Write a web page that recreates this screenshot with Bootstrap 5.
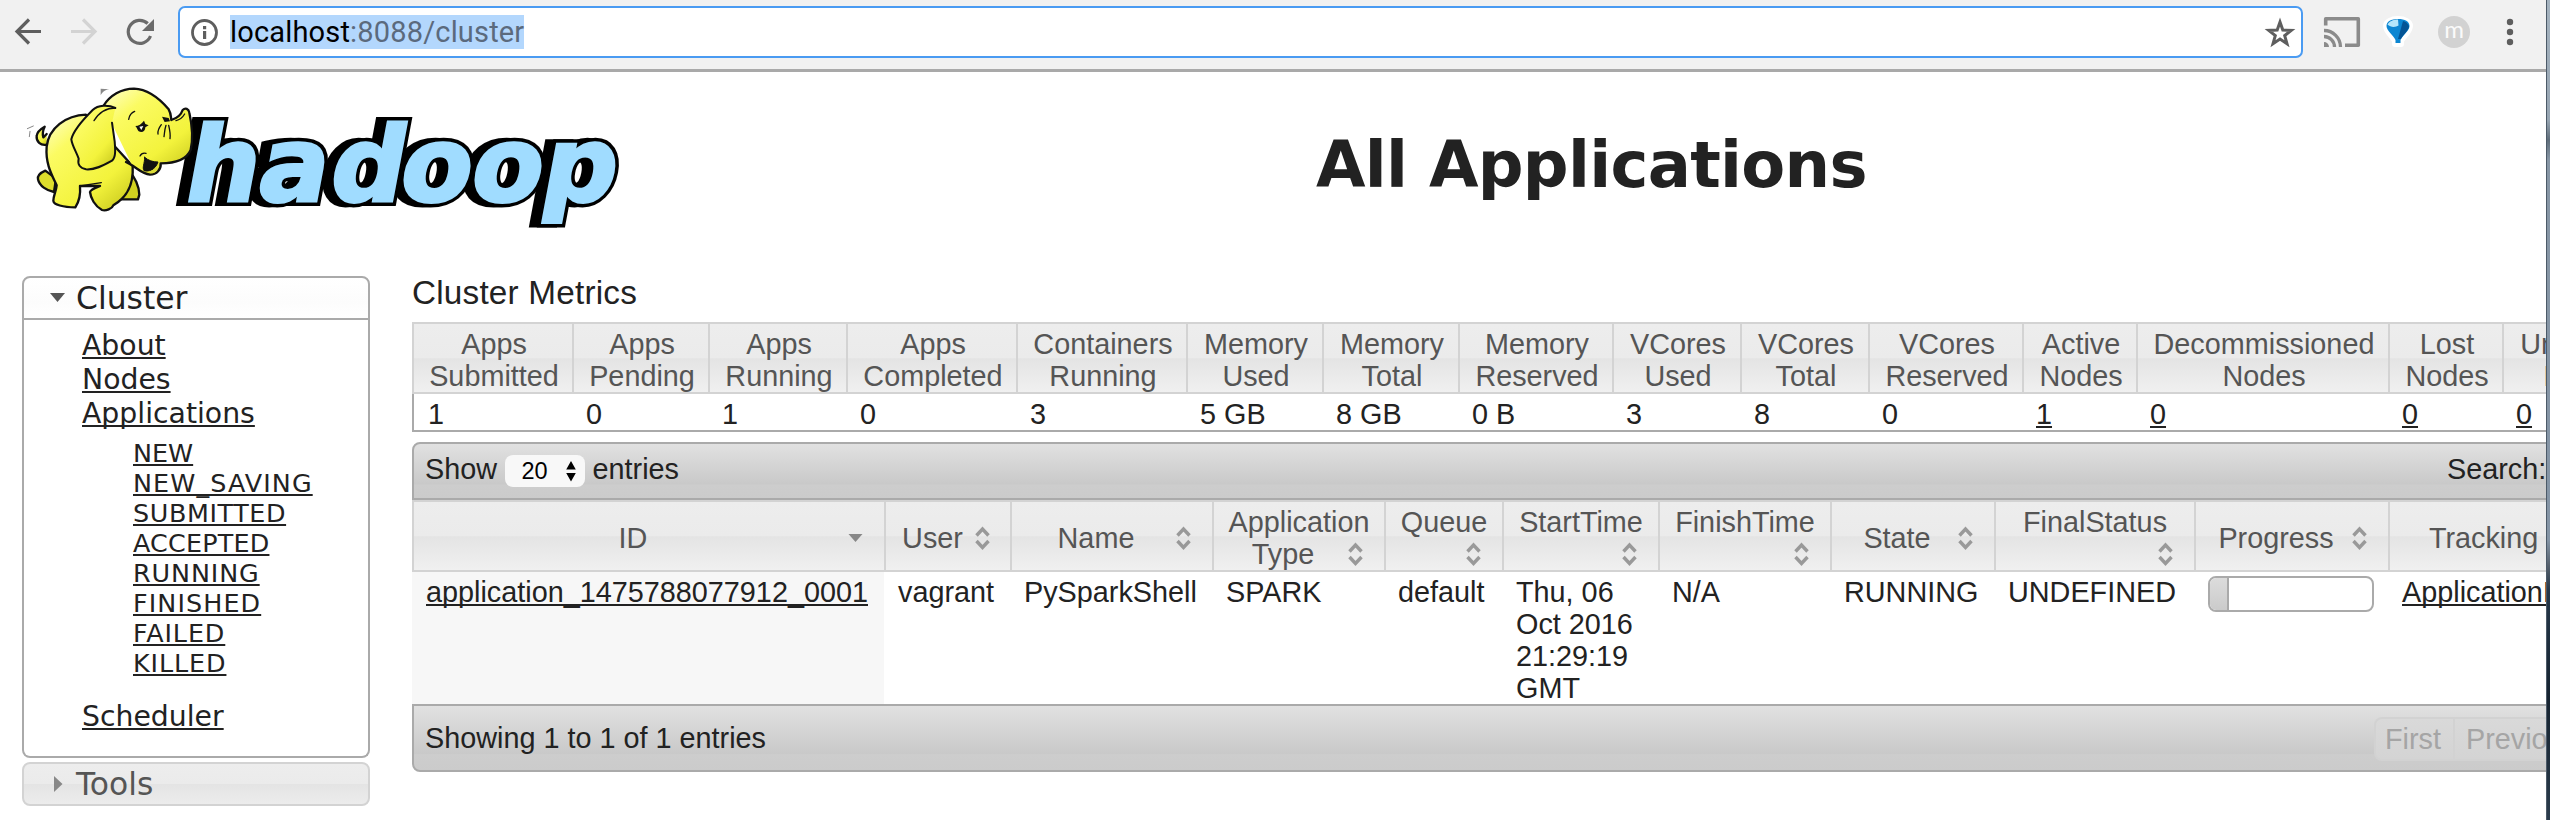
<!DOCTYPE html>
<html lang="en">
<head>
<meta charset="utf-8">
<title>All Applications</title>
<link rel="stylesheet" href="https://cdn.jsdelivr.net/npm/bootstrap@5.3.0/dist/css/bootstrap.min.css">
<script src="https://cdn.jsdelivr.net/npm/bootstrap@5.3.0/dist/js/bootstrap.bundle.min.js"></script>
<style>
  body { margin:0; width:2550px; height:820px; overflow:hidden; background:#fff; color:#222;
         font-family:"Liberation Sans",Arial,sans-serif; font-size:28.8px; line-height:32px; }
  a, a:hover { color:#222; text-decoration:underline; text-decoration-thickness:2px; text-underline-offset:2px; text-decoration-skip-ink:none; }
  .browser { width:2546px; height:820px; overflow:hidden; }
  .desk { width:4px; height:820px; border-left:1px solid #4c5a68;
          background:linear-gradient(#a5b3bf 0,#97a5b2 120px,#5f6d7a 140px,#8796a5 160px,#8494a5 540px,#55606c 566px,#26384a 590px,#162330 700px,#2b3c4c 820px); }
  .toolbar { height:72px; background:#f1f1f1; border-bottom:3px solid #a9a9a9; padding-top:6px; }
  .toolbar svg { flex:none; display:block; }
  .omnibox { margin-left:21px; width:2125px; height:52px; border:2px solid #4a9bf2; border-radius:7px; background:#fff; padding:0 5px 0 9px; }
  .url { margin-left:10px; height:34px; line-height:35px; width:294px; background:#b3d7fd; color:#5b6a7d; font-family:Roboto,sans-serif; font-size:29px; letter-spacing:.17px; white-space:nowrap; }
  .url b { font-weight:400; color:#000; }
  .masthead { height:204px; }
  .masthead svg { flex:none; display:block; }
  .page-title { margin:0 0 0 676px; padding-top:55px; font:bold 64px/76px "DejaVu Sans",Verdana,sans-serif; letter-spacing:-.7px; white-space:nowrap; }
  .side { margin-left:22px; width:348px; font-family:"DejaVu Sans",Verdana,sans-serif; }
  .side-head { height:44px; border:2px solid #aaa; border-radius:8px 8px 0 0; font-size:31.4px; line-height:40px; background:linear-gradient(#fff,#fcfcfc 60%,#fff); padding-left:26px; }
  .side-body { height:438px; border:2px solid #aaa; border-top:0; border-radius:0 0 8px 8px; padding:9px 0 0 58px; font-size:28.3px; line-height:34px; }
  .side-body .states { padding:7px 0 22px 51px; font-size:25.4px; line-height:30px; }
  .sp-2 { letter-spacing:.2px; } .sp-6 { letter-spacing:.6px; } .sp-9 { letter-spacing:.9px; } .sp-11 { letter-spacing:1.1px; }
  .side-tools { margin-top:4px; height:44px; border:2px solid #d3d3d3; border-radius:8px; color:#555; background:linear-gradient(#ededed 0,#ebebeb 50%,#e4e4e4 51%,#ececec 100%); }
  .content-pane { margin-left:42px; width:2134px; overflow:hidden; }
  .wide { width:2252px; }
  .metrics-title { font-size:33.3px; line-height:38px; margin:-2px 0 10px; letter-spacing:.2px; white-space:nowrap; }
  .grid-table { width:2252px; table-layout:fixed; border-collapse:separate; border-spacing:0; }
  .grid-table th { font-weight:400; color:#555; text-align:center; vertical-align:middle; height:72px; padding:4px 0 0 2px;
      border-top:2px solid #d3d3d3; border-bottom:2px solid #d3d3d3; border-left:2px solid #d3d3d3;
      background:linear-gradient(#ededed 0,#ebebeb 50%,#e4e4e4 51%,#f0f0f0 100%); }
  .metrics td { height:38px; padding:4px 0 0 14px; line-height:32px; border-bottom:2px solid #aaa; vertical-align:top; white-space:nowrap; }
  .metrics td:first-child { border-left:2px solid #aaa; }
  .bar-top, .bar-bottom { border:2px solid #aaa; background:linear-gradient(#e1e1e1 0,#c9c9c9 74%,#cdcdcd 76%,#cbcbcb 100%); padding-left:11px; white-space:nowrap; }
  .bar-top { margin-top:10px; height:58px; border-radius:8px 0 0 0; }
  .bar-bottom { height:68px; border-radius:0 0 0 8px; }
  .picker { margin:0 8px 0 7.5px; width:80px; height:32px; border-radius:8px; background:#f8f8f8; color:#000; font-size:23.5px; padding:0 9px 0 17px; }
  .find { width:215px; }
  .apps th { height:72px; padding:4px 12px 0 12px; }
  .apps th:last-child { padding-right:30px; }
  .apps th .hd { display:flow-root; }
  .apps th.snug .hd { margin-right:-1px; }
  .sorter { float:right; width:32px; height:32px; display:block; }
  .apps td { height:132px; padding:4px 8px 0 14px; vertical-align:top; white-space:nowrap; }
  .apps td:first-child { background:#f7f7f7; }
  .meter { width:166px; height:36px; border:2px solid #aaa; border-radius:8px; overflow:hidden; background:#fff; }
  .meter div { height:32px; background:linear-gradient(#dcdcdc,#cbcbcb); border-right:2px solid #aaa; }
  .pager { width:288px; margin-top:1px; }
  .pager span { height:44px; line-height:40px; border:2px solid #d2d2d2; border-right-width:0; background:linear-gradient(#d9d9d9,#d4d4d4); color:#a5a5a5; padding:0 11px; }
  .pager span:first-child { border-radius:8px 0 0 8px; width:79px; padding-left:9px; }
</style>
</head>
<body class="d-flex">
<svg width="0" height="0" class="position-absolute">
  <symbol id="sort" viewBox="0 0 32 32"><path d="M9.500 13.500l6-6.500 6 6.500M9.500 19l6 6.500 6-6.500" fill="none" stroke="#999" stroke-width="3.400"/></symbol>
</svg>
<div class="browser flex-shrink-0">
  <div class="toolbar d-flex">
    <svg width="157" height="52" viewBox="0 6 157 52" fill="none" stroke-width="3.200">
      <path d="M41 31.500H17M29 19.500 17 31.500l12 12" stroke="#5e5e5e"/>
      <path d="M71 31.500h24M83 19.500l12 12-12 12" stroke="#d3d3d3"/>
      <path d="M150.500 36a11.500 11.500 0 1 1-2.800-12.500" stroke="#6a6a6a"/>
      <path d="M154 19v12h-12z" fill="#6a6a6a"/>
    </svg>
    <div class="omnibox d-flex align-items-center">
      <svg width="31" height="30" viewBox="0 0 31 30"><circle cx="15.500" cy="15.500" r="12" fill="none" stroke="#5e5e5e" stroke-width="2.800"/><path d="M14 9h3.200v3.200H14zM14 14h3.200v8H14z" fill="#5e5e5e"/></svg>
      <div class="url"><b>localhost</b>:8088/cluster</div>
      <svg class="ms-auto" width="32" height="32" viewBox="0 0 32 32"><path d="m16 6 2.800 8 8.500.4-6.600 5.200 2.300 8.200-7-4.700-7 4.700 2.300-8.200-6.600-5.200 8.500-.4z" fill="none" stroke="#5e5e5e" stroke-width="3"/></svg>
    </div>
    <svg width="243" height="52" viewBox="2303 6 243 52">
      <path d="M2325.700 25.500v-6.700h32.600v26.400H2345" fill="none" stroke="#8b8b8b" stroke-width="3.600" stroke-linejoin="round"/>
      <path d="M2324 30.500a16.500 16.500 0 0 1 16.500 16.500M2324 36.500a10.500 10.500 0 0 1 10.500 10.500" fill="none" stroke="#8b8b8b" stroke-width="3.300"/>
      <path d="M2324 42a5 5 0 0 1 5 5h-5z" fill="#8b8b8b"/>
      <path d="M2398 19c7 0 12 3 12 7 0 6-7 10-9 15v3h-6v-3c-2-5-9-9-9-15 0-4 5-7 12-7z" fill="#fff" stroke="#fff" stroke-width="6" stroke-linejoin="round"/>
      <path d="M2398 19c7 0 11.500 2.500 11.500 7 0 5-7 9-9 14v3h-5v-3c-2-5-9-9-9-14 0-4.500 4.500-7 11.500-7z" fill="#0c86d2"/>
      <path d="M2398 19.500c-5 0-9 2-10.500 5 3 3 8 3 11 1z" fill="#b5e6fb"/><path d="M2403 21c4 1 6 4 6 6-1 4-6 8-8 12h-3z" fill="#045495"/>
      <circle cx="2454" cy="32" r="16" fill="#d2d2d2"/>
      <text x="2454" y="38" text-anchor="middle" font-family="Lato,sans-serif" font-size="24" fill="#fafafa">m</text>
      <g fill="#5e5e5e"><circle cx="2510" cy="22" r="3.200"/><circle cx="2510" cy="32" r="3.200"/><circle cx="2510" cy="42" r="3.200"/></g>
    </svg>
  </div>

  <header class="masthead d-flex">
    <svg width="640" height="170" viewBox="0 72 640 170">
      <defs><linearGradient id="hide" x1="0" y1="0" x2=".8" y2="1"><stop offset="0" stop-color="#ffffd0"/><stop offset=".3" stop-color="#fbfb62"/><stop offset=".75" stop-color="#f3f33c"/><stop offset="1" stop-color="#cfcf22"/></linearGradient></defs>
      <g transform="translate(0 201) skewX(-10.600)" font-family="DejaVu Sans,sans-serif" font-weight="bold" font-size="104" stroke-linejoin="miter">
        <text x="173 246 318 388 459 530" y="0" fill="#000" stroke="#000" stroke-width="10">hadoop</text>
        <text x="181 254 326 396 467 538" y="0" fill="#000" stroke="#000" stroke-width="10">hadoop</text>
        <text x="181 254 326 396 467 538" y="0" fill="#a0dcff" stroke="#a0dcff" stroke-width="3">hadoop</text>
      </g>
      <g transform="translate(16 76) scale(.33333)" stroke="#111" stroke-width="7" stroke-linejoin="round" stroke-linecap="round" fill="url(#hide)">
        <path d="M92 206c-18 4-32-10-30-26 1-12 10-20 24-28-6 12-8 20-4 32l10-10"/>
        <path d="M88 284c-14 6-24 16-22 26 4 20 26 34 48 38l6-40z" fill="#dede2c"/>
        <path d="M340 286c16 16 30 46 30 70l-4 14h-58z" fill="#d2d220"/>
        <path d="M210 116c-60 2-112 40-118 96-4 50 14 82 30 116-2 20-10 32-10 46 0 12 30 20 66 20 12-18 16-40 14-64h60c-16 6-28 10-30 18 2 18 14 42 36 54 12 4 30-4 34-14 30-18 62-48 58-118z"/>
        <path d="M262 90c20-32 54-52 92-52 46 2 82 36 104 62 8 14 6 22 8 32 20-6 30-18 34-30 8-8 18-4 20 8 8 36 12 76 4 112-12 28-42 40-90 40 2 18-12 34-32 34-22-2-32-14-54-28z" stroke="none"/>
        <path d="M262 90c20-32 54-52 92-52 46 2 82 36 104 62 8 14 6 22 8 32 20-6 30-18 34-30 8-8 18-4 20 8 8 36 12 76 4 112-12 28-42 40-90 40 2 18-12 34-32 34-22-2-32-14-54-28l-18-10" fill="none"/>
        <path d="M298 96c-20-10-52-10-68 6-28 28-58 60-64 88 2 18 16 40 22 58-4 18 4 28 22 32 26 2 50-10 78-26 12-10 10-32 8-58l-8-56" stroke-width="6"/>
        <path d="M386 244c0 20-8 30-2 40 14 4 34-2 42-26-16 0-28-4-40-14z" fill="#111" stroke-width="3"/>
        <path d="M396 288c10-4 20-8 26-16l4-6-4 18c-8 10-20 10-26 4z" fill="#dada38" stroke="none"/>
        <path d="M298 96c-30 0-48 12-64 38M338 130c2-12 8-20 18-24M372 240c4-8 10-10 18-8M426 174c-2-12 4-20 10-28M444 182c2-14 2-22 6-34M462 188c2-16 0-24-4-40M480 134c10-2 20-10 26-20M192 330l64-10" fill="none" stroke-width="4"/>
        <path d="M358 150c10 0 18-6 26-16l4 10 10 4-10 6c0 12-10 18-20 12-4-4-4-10-10-16z" fill="#111" stroke="none"/><path d="M370 152l12-2-6 12z" fill="#fff" stroke="none"/>
        <path d="M438 122l20 4 4 10-16 2z" fill="#111" stroke="none"/>
        <path d="M254 58V38l26 2c-14 2-20 8-26 18z" fill="#888" stroke="none"/><path d="M34 158l18-8M40 182l2-16" stroke="#888" stroke-width="3"/>
      </g>
    </svg>
    <h1 class="page-title">All Applications</h1>
  </header>

  <div class="d-flex align-items-start">
    <nav class="side flex-shrink-0">
      <div class="side-head d-flex align-items-center"><svg width="26" height="20"><path d="M0 5h15l-7.500 9z" fill="#555"/></svg><span>Cluster</span></div>
      <div class="side-body">
        <div><a href="#">About</a></div>
        <div><a href="#">Nodes</a></div>
        <div><a href="#">Applications</a></div>
        <div class="states">
          <div><a href="#">NEW</a></div><div><a class="sp-11" href="#">NEW_SAVING</a></div><div><a class="sp-6" href="#">SUBMITTED</a></div><div><a class="sp-2" href="#">ACCEPTED</a></div>
          <div><a class="sp-9" href="#">RUNNING</a></div><div><a class="sp-11" href="#">FINISHED</a></div><div><a class="sp-9" href="#">FAILED</a></div><div><a class="sp-9" href="#">KILLED</a></div>
        </div>
        <div><a href="#">Scheduler</a></div>
      </div>
      <div class="side-head side-tools d-flex align-items-center"><svg width="26" height="20"><path d="M4 2v16l8.500-8z" fill="#888"/></svg><span>Tools</span></div>
    </nav>

    <main class="content-pane">
      <div class="metrics-title">Cluster Metrics</div>
      <table class="grid-table metrics">
        <colgroup><col style="width:160px"><col style="width:136px"><col style="width:138px"><col style="width:170px"><col style="width:170px"><col style="width:136px"><col style="width:136px"><col style="width:154px"><col style="width:128px"><col style="width:128px"><col style="width:154px"><col style="width:114px"><col style="width:252px"><col style="width:114px"><col style="width:162px"></colgroup>
        <thead><tr><th>Apps<br>Submitted</th><th>Apps<br>Pending</th><th>Apps<br>Running</th><th>Apps<br>Completed</th><th>Containers<br>Running</th><th>Memory<br>Used</th><th>Memory<br>Total</th><th>Memory<br>Reserved</th><th>VCores<br>Used</th><th>VCores<br>Total</th><th>VCores<br>Reserved</th><th>Active<br>Nodes</th><th>Decommissioned<br>Nodes</th><th>Lost<br>Nodes</th><th>Unhealthy<br>Nodes</th></tr></thead>
        <tbody><tr><td>1</td><td>0</td><td>1</td><td>0</td><td>3</td><td>5 GB</td><td>8 GB</td><td>0 B</td><td>3</td><td>8</td><td>0</td><td><a href="#">1</a></td><td><a href="#">0</a></td><td><a href="#">0</a></td><td><a href="#">0</a></td></tr></tbody>
      </table>

      <div class="bar-top wide d-flex align-items-center pb-1">
        <span>Show</span>
        <span class="picker d-flex align-items-center justify-content-between mt-1"><span>20</span><svg width="10" height="22"><path d="M5 1l4.800 8.500H.2zM5 21.500l4.800-8.500H.2z"/></svg></span>
        <span>entries</span>
        <span class="find ms-auto">Search:</span>
      </div>
      <table class="grid-table apps">
        <colgroup><col style="width:472px"><col style="width:126px"><col style="width:202px"><col style="width:172px"><col style="width:118px"><col style="width:156px"><col style="width:172px"><col style="width:164px"><col style="width:200px"><col style="width:194px"><col style="width:276px"></colgroup>
        <thead><tr>
          <th><div class="hd"><svg class="sorter" viewBox="0 0 32 32"><path d="M8.500 12h14l-7 8z" fill="#888"/></svg>ID</div></th>
          <th class="snug"><div class="hd"><svg class="sorter"><use href="#sort"/></svg>User</div></th>
          <th><div class="hd"><svg class="sorter"><use href="#sort"/></svg>Name</div></th>
          <th><div class="hd">Application<br><svg class="sorter"><use href="#sort"/></svg>Type</div></th>
          <th><div class="hd">Queue<br><svg class="sorter"><use href="#sort"/></svg></div></th>
          <th><div class="hd">StartTime<br><svg class="sorter"><use href="#sort"/></svg></div></th>
          <th><div class="hd">FinishTime<br><svg class="sorter"><use href="#sort"/></svg></div></th>
          <th><div class="hd"><svg class="sorter"><use href="#sort"/></svg>State</div></th>
          <th><div class="hd">FinalStatus<br><svg class="sorter"><use href="#sort"/></svg></div></th>
          <th><div class="hd"><svg class="sorter"><use href="#sort"/></svg>Progress</div></th>
          <th><div class="hd"><svg class="sorter"><use href="#sort"/></svg>Tracking UI</div></th>
        </tr></thead>
        <tbody><tr>
          <td><a href="#">application_1475788077912_0001</a></td><td>vagrant</td><td>PySparkShell</td><td>SPARK</td><td>default</td>
          <td>Thu, 06<br>Oct 2016<br>21:29:19<br>GMT</td><td>N/A</td><td>RUNNING</td><td>UNDEFINED</td>
          <td><div class="meter"><div style="width:12%"></div></div></td><td><a href="#">ApplicationMaster</a></td>
        </tr></tbody>
      </table>
      <div class="bar-bottom wide d-flex align-items-center">
        <span>Showing 1 to 1 of 1 entries</span>
        <div class="pager ms-auto d-flex"><span>First</span><span>Previous</span></div>
      </div>
    </main>
  </div>
</div>
<div class="desk flex-shrink-0"></div>
</body>
</html>
